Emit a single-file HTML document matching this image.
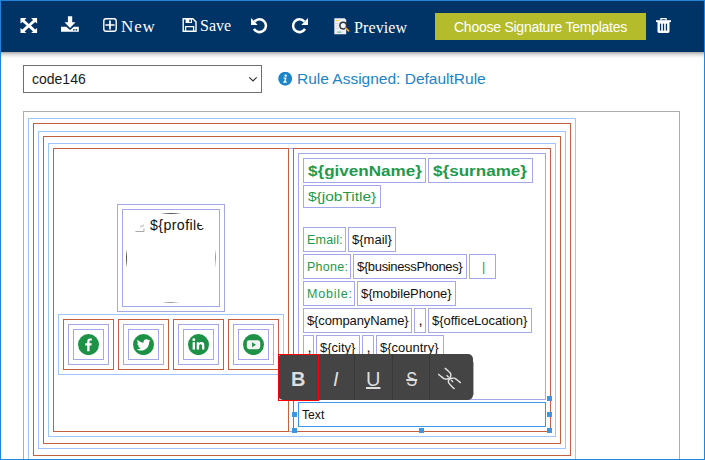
<!DOCTYPE html>
<html><head><meta charset="utf-8">
<style>
html,body{margin:0;padding:0;}
body{width:705px;height:460px;position:relative;overflow:hidden;background:#fff;font-family:"Liberation Sans",sans-serif;}
.a{position:absolute;box-sizing:border-box;}
.bx{position:absolute;box-sizing:border-box;border:1px solid;}
.bl{border-color:#9fc5ff;}
.br{border-color:#c5603f;}
.lv{border-color:#a4a7e8;}
.t{position:absolute;white-space:nowrap;line-height:1;}
.f{position:absolute;box-sizing:border-box;border:1px solid #a4a7e8;height:25px;font-size:12.5px;color:#111;white-space:nowrap;}
.f span{position:absolute;left:3px;top:6px;line-height:1;}
.g{color:#23994a;}
.top{color:#fff;font-family:"Liberation Serif",serif;}
</style></head><body>
<!-- top bar -->
<div class="a" style="left:0;top:0;width:705px;height:52px;background:#003366;"></div>
<div class="a" style="left:0;top:52px;width:705px;height:7px;background:linear-gradient(#a9a9a9,#dcdcdc 35%,#f6f6f6 70%,#fff);"></div>

<!-- expand icon -->
<svg class="a" style="left:20px;top:17px" width="18" height="17" viewBox="0 0 18 17"><g fill="#fff"><path d="M0.5,1 L6.5,1 L4.6,2.9 L8.8,7.1 L13,2.9 L11.1,1 L17.1,1 L17.1,6.6 L15.2,4.9 L11,8.6 L15.2,12.6 L17.1,10.9 L17.1,16 L11.1,16 L13,14.4 L8.8,10.4 L4.6,14.4 L6.5,16 L0.5,16 L0.5,10.9 L2.4,12.6 L6.6,8.6 L2.4,4.9 L0.5,6.6 Z"/></g></svg>
<!-- download icon -->
<svg class="a" style="left:60px;top:15px" width="20" height="18" viewBox="0 0 20 18"><g fill="#fff"><path d="M7.9,1.2 h4.3 v6 h3.4 l-5.55,5.7 l-5.55,-5.7 h3.4 z"/><path d="M1,11.7 h5.2 l3.85,3.2 l3.85,-3.2 h4.9 v5.1 h-17.8 z"/></g><rect x="13.2" y="14" width="1.3" height="1.6" fill="#003366"/><rect x="15.6" y="14" width="1.3" height="1.6" fill="#003366"/></svg>
<!-- New -->
<svg class="a" style="left:102px;top:17px" width="16" height="16" viewBox="0 0 16 16"><rect x="1.8" y="1.8" width="12.4" height="12.4" rx="2.2" fill="none" stroke="#fff" stroke-width="1.4"/><path d="M8,3.4v9.2M3.4,8h9.2" stroke="#fff" stroke-width="1.7"/></svg>
<div class="t top" style="left:121px;top:18px;font-size:17px;letter-spacing:0.9px">New</div>
<!-- Save -->
<svg class="a" style="left:182px;top:17px" width="16" height="16" viewBox="0 0 16 16"><path d="M1.2,1.7h9.6l3.2,3.2v9.4h-12.8z" fill="none" stroke="#fff" stroke-width="1.4"/><rect x="3.6" y="2" width="6.4" height="4" fill="#fff"/><rect x="7.3" y="2.6" width="1.5" height="2.5" fill="#003366"/><path d="M3.6,14v-4.3h8v4.3" fill="none" stroke="#fff" stroke-width="1.3"/></svg>
<div class="t top" style="left:200px;top:18px;font-size:16px;">Save</div>
<!-- undo -->
<svg class="a" style="left:250px;top:17px" width="18" height="17" viewBox="0 0 18 17"><path d="M4.6,4.6 A6.4,6.4 0 1 1 3.96,11.9" fill="none" stroke="#fff" stroke-width="2.5"/><path d="M1,0.9 L1,7.9 L7.7,7.9 Z" fill="#fff"/></svg>
<!-- redo -->
<svg class="a" style="left:291px;top:17px" width="18" height="17" viewBox="0 0 18 17"><path d="M13.4,4.6 A6.4,6.4 0 1 0 14.04,11.9" fill="none" stroke="#fff" stroke-width="2.5"/><path d="M17,0.9 L17,7.9 L10.3,7.9 Z" fill="#fff"/></svg>
<!-- preview icon -->
<svg class="a" style="left:333px;top:17px" width="18" height="18" viewBox="0 0 18 18"><path d="M1.3,1.2h10.3l1.6,1.6v14.4h-11.9z" fill="#eef0f2"/><rect x="2.5" y="3" width="3.6" height="1" fill="#f3c84a"/><rect x="2.5" y="6" width="3" height="0.8" fill="#ccd"/><rect x="2.5" y="8.5" width="3" height="0.8" fill="#ccd"/><rect x="2.5" y="11" width="3" height="0.8" fill="#ccd"/><rect x="4" y="14.6" width="4.5" height="1" fill="#4bb6a4"/><circle cx="10.2" cy="8.6" r="3.3" fill="#f4f6f8" stroke="#2b3440" stroke-width="1.5"/><path d="M12.8,11.2l2.8,2.6" stroke="#f0a23a" stroke-width="1.8" stroke-linecap="round"/></svg>
<div class="t top" style="left:354px;top:20px;font-size:16px;letter-spacing:0.1px">Preview</div>
<!-- button -->
<div class="a" style="left:435px;top:13px;width:211px;height:27px;background:#b4bc2c;"></div>
<div class="t" style="left:454px;top:20px;font-size:14px;letter-spacing:-0.25px;color:#fff;" id="choose">Choose Signature Templates</div>
<!-- trash -->
<svg class="a" style="left:655px;top:17px" width="17" height="17" viewBox="0 0 17 17"><path d="M1,3.2h15v1.9h-15z" fill="#fff"/><path d="M6,3.2v-1.6h5v1.6" fill="none" stroke="#fff" stroke-width="1.4"/><path d="M2.5,5h12v9.6q0,1.4 -1.4,1.4h-9.2q-1.4,0 -1.4,-1.4z" fill="#fff"/><rect x="4.9" y="6.6" width="1.3" height="7" fill="#003366"/><rect x="7.85" y="6.6" width="1.3" height="7" fill="#003366"/><rect x="10.8" y="6.6" width="1.3" height="7" fill="#003366"/></svg>

<!-- select -->
<div class="bx" style="left:23px;top:65px;width:239px;height:28px;border-color:#6f6f6f;background:#fff;"></div>
<div class="t" style="left:32px;top:72px;font-size:14px;color:#1a1a1a;" id="code">code146</div>
<svg class="a" style="left:248px;top:76px" width="10" height="7" viewBox="0 0 10 7"><path d="M1.3,1.3L5,5L8.7,1.3" fill="none" stroke="#333" stroke-width="1.2"/></svg>
<!-- info -->
<svg class="a" style="left:278px;top:72px" width="15" height="14" viewBox="0 0 15 14"><circle cx="7.2" cy="6.7" r="6.95" fill="#1c84c9"/><circle cx="7.7" cy="3.6" r="1.2" fill="#fff"/><path d="M5.6,5.6h3l-1,4h1.2v1.2h-3.6v-1.2h1l0.7,-2.8h-1.3z" fill="#fff"/></svg>
<div class="t" style="left:297px;top:71px;font-size:15.5px;color:#1c84c9;" id="rule">Rule Assigned: DefaultRule</div>

<!-- canvas -->
<div class="bx" style="left:23px;top:111px;width:657px;height:400px;border-color:#adadad;"></div>
<div class="bx bl" style="left:28px;top:118px;width:548px;height:400px;"></div>
<div class="bx br" style="left:33px;top:123px;width:538px;height:333px;"></div>
<div class="bx bl" style="left:38px;top:131px;width:528px;height:318px;"></div>
<div class="bx br" style="left:43px;top:136px;width:518px;height:308px;"></div>
<div class="bx bl" style="left:48px;top:143px;width:508px;height:294px;"></div>
<div class="bx lv" style="left:53px;top:148px;width:498px;height:284px;"></div>
<div class="bx br" style="left:53px;top:148px;width:236px;height:284px;"></div>
<div class="bx br" style="left:293px;top:148px;width:258px;height:284px;"></div>

<!-- profile -->
<div class="bx lv" style="left:117px;top:204px;width:108px;height:108px;"></div>
<div class="bx lv" style="left:122px;top:209px;width:98px;height:98px;"></div>
<div class="a" style="left:126px;top:213px;width:90px;height:90px;border-radius:50%;overflow:hidden;">
  <div class="a" style="left:0;top:0;width:90px;height:90px;border:1px solid #555;border-right-color:#999;border-bottom-color:#999;"></div>
  <svg class="a" style="left:9px;top:8px" width="12" height="12" viewBox="0 0 12 12"><path d="M0.5,10.5h8.5v-3" fill="none" stroke="#a8a8a8" stroke-width="1"/><path d="M5,6.5l1.5,-2l1,1.5l1,-2.5" fill="none" stroke="#bbb" stroke-width="1"/></svg>
  <div class="t" style="left:24px;top:5px;font-size:14.2px;letter-spacing:0.4px;color:#111;" id="prof">${profilePhoto}</div>
</div>

<!-- social -->
<div class="bx bl" style="left:58px;top:314px;width:226px;height:61px;"></div>
<div class="bx br" style="left:63px;top:319px;width:51px;height:51px;"></div>
<div class="bx lv" style="left:68px;top:324px;width:41px;height:41px;"></div>
<div class="bx lv" style="left:73px;top:329px;width:31px;height:31px;"></div>
<svg class="a" style="left:78px;top:334px" width="21" height="21" viewBox="0 0 21 21"><circle cx="10.5" cy="10.6" r="10.5" fill="#1d9247"/><path d="M11.6,16.6v-5h-1.7v-1.9h1.7v-1.5c0,-1.7 1,-2.6 2.5,-2.6c0.7,0 1.3,0.05 1.5,0.1v1.7h-1c-0.8,0 -1,0.4 -1,1v1.3h1.9l-0.25,1.9h-1.65v5z" fill="#fff" transform="translate(10.5 10.6) scale(1.15) translate(-10.5 -10.6) translate(-2.2,-0.3)"/></svg>
<div class="bx br" style="left:118px;top:319px;width:51px;height:51px;"></div>
<div class="bx lv" style="left:123px;top:324px;width:41px;height:41px;"></div>
<div class="bx lv" style="left:128px;top:329px;width:31px;height:31px;"></div>
<svg class="a" style="left:133px;top:334px" width="21" height="21" viewBox="0 0 21 21"><circle cx="10.5" cy="10.6" r="10.5" fill="#1d9247"/><path d="M16.3,7.4c-0.4,0.2 -0.9,0.3 -1.4,0.4c0.5,-0.3 0.9,-0.8 1.1,-1.3c-0.5,0.3 -1,0.5 -1.5,0.6c-0.45,-0.5 -1.1,-0.8 -1.8,-0.8c-1.35,0 -2.4,1.1 -2.4,2.4c0,0.2 0,0.4 0.05,0.55c-2,-0.1 -3.8,-1.05 -5,-2.5c-0.2,0.35 -0.3,0.75 -0.3,1.2c0,0.85 0.4,1.55 1.05,2c-0.4,0 -0.75,-0.1 -1.1,-0.3c0,1.2 0.8,2.15 1.9,2.4c-0.35,0.1 -0.7,0.1 -1.1,0.05c0.3,0.95 1.2,1.65 2.25,1.7c-1,0.8 -2.2,1.15 -3.55,1c1.05,0.7 2.35,1.1 3.7,1.1c4.4,0 6.85,-3.65 6.85,-6.85v-0.3c0.5,-0.35 0.9,-0.8 1.2,-1.3z" fill="#fff" transform="translate(10.5 10.6) scale(1.18) translate(-10.5 -10.6) translate(0.2,-0.3)"/></svg>
<div class="bx br" style="left:173px;top:319px;width:51px;height:51px;"></div>
<div class="bx lv" style="left:178px;top:324px;width:41px;height:41px;"></div>
<div class="bx lv" style="left:183px;top:329px;width:31px;height:31px;"></div>
<svg class="a" style="left:188px;top:334px" width="21" height="21" viewBox="0 0 21 21"><circle cx="10.5" cy="10.6" r="10.5" fill="#1d9247"/><g fill="#fff" transform="translate(10.5 10.6) scale(1.18) translate(-10.5 -10.6) translate(0.1 0)"><rect x="5.4" y="8.6" width="2" height="6.2"/><circle cx="6.4" cy="6.5" r="1.2"/><path d="M8.9,8.6h1.9v0.9c0.3,-0.55 1,-1.05 2.05,-1.05c2.1,0 2.5,1.3 2.5,3.1v3.25h-2v-2.9c0,-0.75 0,-1.65 -1.05,-1.65s-1.4,0.75 -1.4,1.6v2.95h-2z"/></g></svg>
<div class="bx br" style="left:228px;top:319px;width:51px;height:51px;"></div>
<div class="bx lv" style="left:233px;top:324px;width:41px;height:41px;"></div>
<div class="bx lv" style="left:238px;top:329px;width:31px;height:31px;"></div>
<svg class="a" style="left:243px;top:334px" width="21" height="21" viewBox="0 0 21 21"><circle cx="10.5" cy="10.6" r="10.5" fill="#1d9247"/><g transform="translate(10.5 10.6) scale(1.1) translate(-10.5 -10.6)"><rect x="4.4" y="6.6" width="12.2" height="8.2" rx="2.2" fill="#f2f2f2"/><path d="M9.2,8.5l3.6,2.2l-3.6,2.2z" fill="#1d9247"/></g></svg>

<!-- right col -->
<div class="bx lv" style="left:298px;top:153px;width:248px;height:247px;"></div>
<div class="f" style="left:303px;top:158px;width:123px;"><span class="g" id="gn" style="font-weight:bold;font-size:14px;top:5px;left:4px;transform:scaleX(1.22);transform-origin:0 0">${givenName}</span></div>
<div class="f" style="left:428px;top:158px;width:105px;"><span class="g" id="sn" style="font-weight:bold;font-size:14px;top:5px;left:4px;transform:scaleX(1.22);transform-origin:0 0">${surname}</span></div>
<div class="f" style="left:303px;top:185px;width:78px;height:23px;"><span class="g" id="jt" style="font-size:12px;top:5px;left:4px;transform:scaleX(1.29);transform-origin:0 0">${jobTitle}</span></div>

<div class="f" style="left:303px;top:227px;width:43px;"><span class="g" style="letter-spacing:0.2px" id="r1a">Email:</span></div>
<div class="f" style="left:348px;top:227px;width:48px;"><span style="font-size:13px;top:5px;" id="r1b">${mail}</span></div>
<div class="f" style="left:303px;top:254px;width:48px;"><span class="g" style="letter-spacing:0.26px" id="r2a">Phone:</span></div>
<div class="f" style="left:353px;top:254px;width:114px;"><span style="letter-spacing:-0.35px;font-size:13px;top:5px;" id="r2b">${businessPhones}</span></div>
<div class="f" style="left:469px;top:254px;width:27px;"><span class="g" style="left:12px" id="r2c">|</span></div>
<div class="f" style="left:303px;top:281px;width:52px;"><span class="g" style="letter-spacing:0.8px" id="r3a">Mobile:</span></div>
<div class="f" style="left:357px;top:281px;width:99px;"><span style="letter-spacing:-0.1px;font-size:13px;top:5px;" id="r3b">${mobilePhone}</span></div>
<div class="f" style="left:303px;top:308px;width:109px;"><span style="letter-spacing:-0.13px;font-size:13px;top:5px;" id="r4a">${companyName}</span></div>
<div class="f" style="left:414px;top:308px;width:12px;"><span id="r4b" style="font-size:15px;top:3px;left:3.5px">,</span></div>
<div class="f" style="left:428px;top:308px;width:104px;"><span style="letter-spacing:-0.04px;font-size:13px;top:5px;" id="r4c">${officeLocation}</span></div>
<div class="f" style="left:303px;top:335px;width:11px;"><span id="r5a" style="font-size:15px;top:3px;left:3.5px">,</span></div>
<div class="f" style="left:316px;top:335px;width:44px;"><span style="font-size:13px;top:5px;" id="r5b">${city}</span></div>
<div class="f" style="left:362px;top:335px;width:12px;"><span id="r5c" style="font-size:15px;top:3px;left:3.5px">,</span></div>
<div class="f" style="left:376px;top:335px;width:68px;"><span style="font-size:13px;top:5px;" id="r5d">${country}</span></div>

<div class="a" style="left:473px;top:362px;width:1px;height:33px;background:#a4a7e8;"></div>
<!-- Text box selected -->
<div class="bx" style="left:298px;top:402px;width:248px;height:25px;border-color:#3b97e3;"></div>
<div class="t" style="left:302px;top:409px;font-size:12.2px;color:#111;" id="txt">Text</div>
<!-- handles -->
<div class="a" style="left:292px;top:412px;width:5px;height:5px;background:#3b97e3;"></div>
<div class="a" style="left:292px;top:428px;width:5px;height:5px;background:#3b97e3;"></div>
<div class="a" style="left:419px;top:428px;width:5px;height:5px;background:#3b97e3;"></div>
<div class="a" style="left:547px;top:396px;width:5px;height:5px;background:#3b97e3;"></div>
<div class="a" style="left:547px;top:412px;width:5px;height:5px;background:#3b97e3;"></div>
<div class="a" style="left:547px;top:428px;width:5px;height:5px;background:#3b97e3;"></div>

<!-- RTE toolbar -->
<div class="a" style="left:278px;top:354px;width:195px;height:46px;background:#444;border-radius:5px;"></div>
<div class="a" style="left:354px;top:354px;width:1px;height:46px;background:#383838;"></div>
<div class="a" style="left:392px;top:354px;width:1px;height:46px;background:#383838;"></div>
<div class="a" style="left:429px;top:354px;width:1px;height:46px;background:#383838;"></div>
<div class="bx" style="left:278px;top:354px;width:41px;height:47px;border-color:#f00;"></div>
<div class="t" style="left:291px;top:369px;font-size:20px;font-weight:bold;color:#ddd;" id="tb">B</div>
<div class="t" style="left:333px;top:369px;font-size:20px;color:#ddd;font-style:italic;" id="ti">I</div>
<div class="t" style="left:366px;top:369px;font-size:20px;color:#ddd;text-decoration:underline;" id="tu">U</div>
<div class="t" style="left:405px;top:369px;font-size:20px;color:#ddd;text-decoration:line-through;transform:scaleX(0.82);transform-origin:50% 50%;" id="ts">S</div>
<svg class="a" style="left:430px;top:355px" width="43" height="45" viewBox="430 355 43 45"><g fill="none" stroke="#e2e2e2" stroke-width="1.4" stroke-linecap="butt" stroke-linejoin="round"><path d="M438.26,374.09 C438.70,374.45 440.00,375.53 440.87,376.24 C441.74,376.95 442.72,377.86 443.48,378.33 C444.24,378.79 444.78,378.93 445.43,379.04 C446.09,379.15 446.79,379.10 447.39,378.98 C447.99,378.86 448.53,378.65 449.02,378.33 C449.51,378.00 450.02,377.51 450.33,377.02 C450.63,376.53 450.79,375.93 450.85,375.39 C450.90,374.85 450.82,374.23 450.65,373.76 C450.49,373.29 450.41,373.16 449.87,372.59 C449.33,372.01 448.24,371.09 447.39,370.30 C446.54,369.52 445.22,368.29 444.78,367.89"/><path d="M454.57,389.09 C454.08,388.60 452.55,387.11 451.63,386.15 C450.71,385.20 449.57,384.11 449.02,383.35 C448.48,382.59 448.40,382.15 448.37,381.59 C448.34,381.02 448.53,380.42 448.83,379.96 C449.12,379.49 449.61,379.08 450.13,378.78 C450.65,378.49 451.33,378.30 451.96,378.20 C452.59,378.09 453.28,378.02 453.91,378.13 C454.54,378.24 455.03,378.40 455.74,378.85 C456.45,379.29 457.32,380.13 458.15,380.80 C458.99,381.48 460.33,382.54 460.76,382.89"/><path d="M446.61,375.26 L448.70,377.22 M451.17,379.83 L452.93,382.04"/></g></svg>

<!-- window border -->
<div class="a" style="left:0;top:0;width:705px;height:460px;border:1px solid #2186db;pointer-events:none;"></div>
</body></html>
